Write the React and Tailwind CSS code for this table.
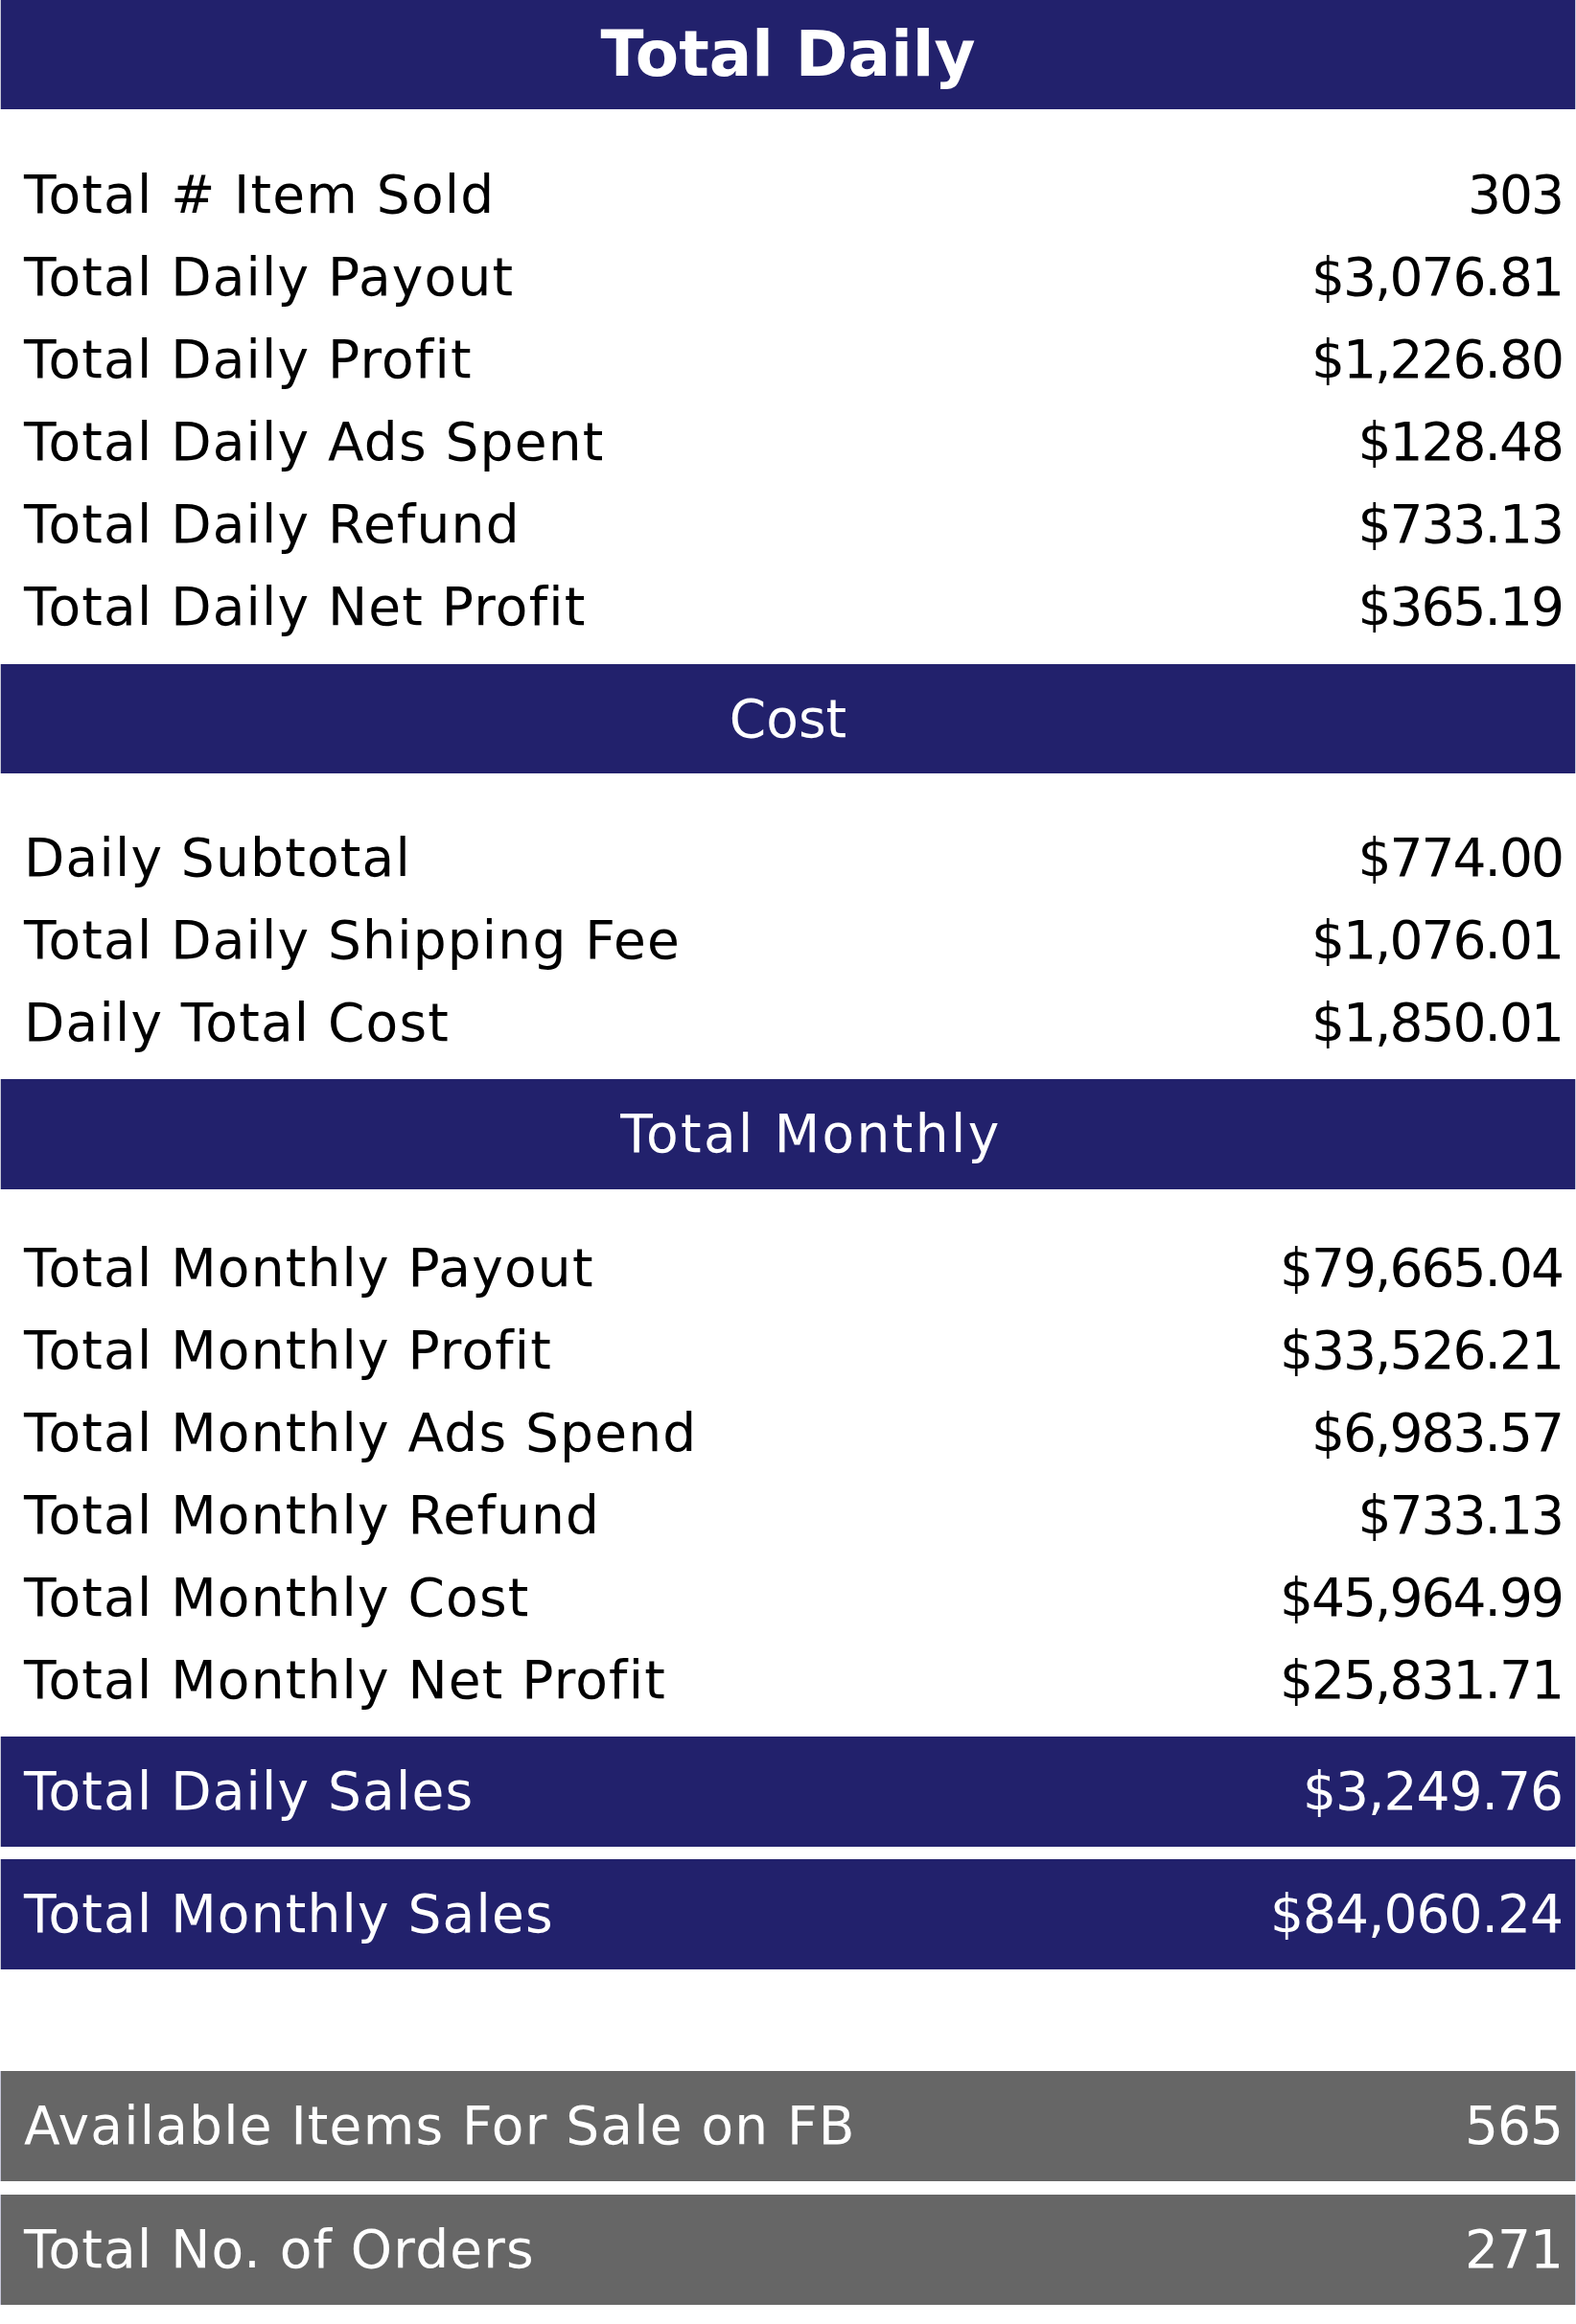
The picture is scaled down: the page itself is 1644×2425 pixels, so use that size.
const dailyRows = [
  ['Total # Item Sold', '303'],
  ['Total Daily Payout', '$3,076.81'],
  ['Total Daily Profit', '$1,226.80'],
  ['Total Daily Ads Spent', '$128.48'],
  ['Total Daily Refund', '$733.13'],
  ['Total Daily Net Profit', '$365.19'],
];

const costRows = [
  ['Daily Subtotal', '$774.00'],
  ['Total Daily Shipping Fee', '$1,076.01'],
  ['Daily Total Cost', '$1,850.01'],
];

const monthlyRows = [
  ['Total Monthly Payout', '$79,665.04'],
  ['Total Monthly Profit', '$33,526.21'],
  ['Total Monthly Ads Spend', '$6,983.57'],
  ['Total Monthly Refund', '$733.13'],
  ['Total Monthly Cost', '$45,964.99'],
  ['Total Monthly Net Profit', '$25,831.71'],
];

function Row({ label, value }) {
  return (
    <div className="h-[86px] flex items-center justify-between pl-[25px] pr-[14px] text-[55px] leading-none text-black">
      <span className="tracking-[1.2px]">{label}</span>
      <span className="tracking-[-2px]">{value}</span>
    </div>
  );
}

function SectionBar({ children, className = '' }) {
  return (
    <div className={`h-[114px] flex items-center justify-center bg-[#22216c] border-x border-[#c6c6d8] text-white leading-none ${className}`}>
      {children}
    </div>
  );
}

function TotalBar({ label, value, gray }) {
  return (
    <div
      className={`h-[115px] flex items-center justify-between pl-[24px] pr-[13px] text-white text-[55px] leading-none border-x border-[#c6c6d8] ${
        gray ? 'bg-[#666666]' : 'bg-[#22216c]'
      }`}
    >
      <span className="tracking-[1.2px]">{label}</span>
      <span className="tracking-[-1px]">{value}</span>
    </div>
  );
}

export default function App() {
  return (
    <div className="w-[1644px] min-h-[2425px] bg-white font-['DejaVu_Sans',sans-serif]">
      <SectionBar className="text-[66px] font-bold">Total Daily</SectionBar>
      <div className="pt-[46px] pb-[17px]">
        {dailyRows.map(([l, v]) => (
          <Row key={l} label={l} value={v} />
        ))}
      </div>

      <SectionBar className="text-[55px]">Cost</SectionBar>
      <div className="pt-[45px] pb-[16px]">
        {costRows.map(([l, v]) => (
          <Row key={l} label={l} value={v} />
        ))}
      </div>

      <SectionBar className="h-[115px] text-[55px]">
        <span className="pl-[48px] tracking-[2.4px]">Total Monthly</span>
      </SectionBar>
      <div className="pt-[39px] pb-[16px]">
        {monthlyRows.map(([l, v]) => (
          <Row key={l} label={l} value={v} />
        ))}
      </div>

      <div className="flex flex-col gap-[13px]">
        <TotalBar label="Total Daily Sales" value="$3,249.76" />
        <TotalBar label="Total Monthly Sales" value="$84,060.24" />
      </div>

      <div className="mt-[106px] flex flex-col gap-[14px]">
        <TotalBar label="Available Items For Sale on FB" value="565" gray />
        <TotalBar label="Total No. of Orders" value="271" gray />
      </div>
    </div>
  );
}
